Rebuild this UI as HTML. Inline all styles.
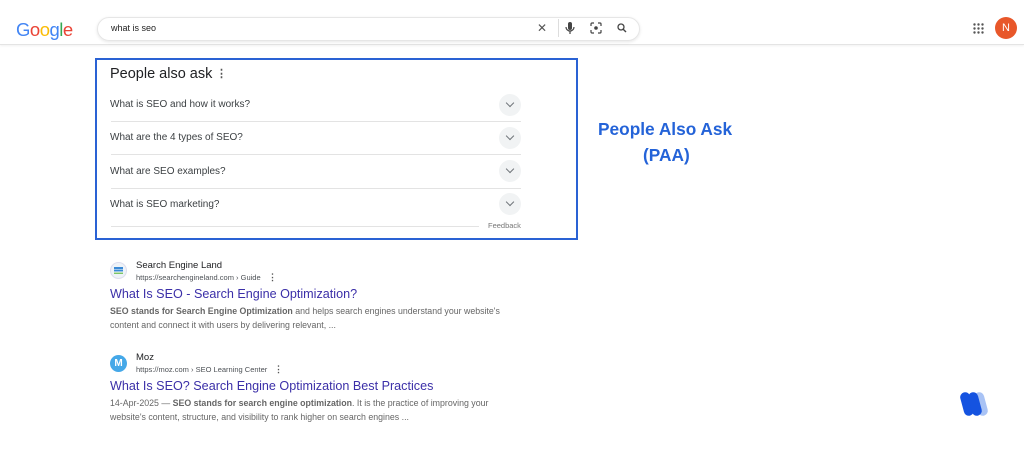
<!DOCTYPE html>
<html><head><meta charset="utf-8"><style>
*{margin:0;padding:0;box-sizing:border-box}
body{width:1024px;height:451px;background:#fff;position:relative;overflow:hidden;font-family:"Liberation Sans",Arial,sans-serif;color:#202124}
.a{position:absolute;white-space:nowrap}
.hdr{position:absolute;left:0;top:0;width:1024px;height:45px;border-bottom:1px solid #e4e4e4;box-shadow:0 1px 2px rgba(0,0,0,.06)}
.sb{position:absolute;left:97px;top:17px;width:543px;height:24px;border:1px solid #e6e6e6;border-radius:12px;box-shadow:0 1px 3px rgba(0,0,0,.1)}
.box{position:absolute;left:95px;top:58px;width:483px;height:182px;border:2px solid #2a62d4}
.q{position:absolute;left:110px;font-size:10px;color:#3c4043}
.sep{position:absolute;left:111px;width:410px;height:1px;background:#e3e3e3}
.chev{position:absolute;left:499px;width:22px;height:22px;border-radius:50%;background:#f1f3f4}
.chev:after{content:"";position:absolute;left:8px;top:6px;width:5px;height:5px;border-right:1.3px solid #70757a;border-bottom:1.3px solid #70757a;transform:rotate(45deg)}
.t{position:absolute;left:110px;font-size:12.6px;color:#3b2fa8}
.s{position:absolute;left:110px;font-size:8.8px;color:#666}
</style></head><body>
<div class="hdr"></div>
<div class="a" style="left:16px;top:19px;font-size:18.5px;letter-spacing:-0.5px"><span style="color:#4285f4">G</span><span style="color:#ea4335">o</span><span style="color:#fbbc05">o</span><span style="color:#4285f4">g</span><span style="color:#34a853">l</span><span style="color:#ea4335">e</span></div>
<div class="sb"></div>
<div class="a" style="left:111px;top:23px;font-size:9px;color:#222">what is seo</div>
<div class="a" style="left:537px;top:21px;font-size:12px;color:#555">✕</div>
<div class="a" style="left:558px;top:19px;width:1px;height:18px;background:#ddd"></div>
<svg class="a" style="left:565px;top:22px" width="10" height="13" viewBox="0 0 10 13"><rect x="3" y="0" width="4" height="8" rx="2" fill="#444"/><path d="M1 5a4 4 0 0 0 8 0M5 9v3" stroke="#444" fill="none" stroke-width="1.2"/></svg>
<svg class="a" style="left:590px;top:22px" width="12" height="12" viewBox="0 0 12 12"><path d="M1 4V2a1 1 0 0 1 1-1h2M8 1h2a1 1 0 0 1 1 1v2M11 8v2a1 1 0 0 1-1 1H8M4 11H2a1 1 0 0 1-1-1V8" stroke="#444" fill="none" stroke-width="1.2"/><circle cx="6" cy="6" r="1.8" fill="#444"/></svg>
<svg class="a" style="left:617px;top:23px" width="10" height="10" viewBox="0 0 10 10"><circle cx="4" cy="4" r="3" stroke="#444" fill="none" stroke-width="1.3"/><path d="M6.2 6.2 9 9" stroke="#444" stroke-width="1.4"/></svg>
<svg class="a" style="left:973px;top:23px" width="11" height="11" viewBox="0 0 11 11" fill="#555"><circle cx="1.5" cy="1.5" r="1.2"/><circle cx="5.5" cy="1.5" r="1.2"/><circle cx="9.5" cy="1.5" r="1.2"/><circle cx="1.5" cy="5.5" r="1.2"/><circle cx="5.5" cy="5.5" r="1.2"/><circle cx="9.5" cy="5.5" r="1.2"/><circle cx="1.5" cy="9.5" r="1.2"/><circle cx="5.5" cy="9.5" r="1.2"/><circle cx="9.5" cy="9.5" r="1.2"/></svg>
<div class="a" style="left:995px;top:17px;width:22px;height:22px;border-radius:50%;background:#e8572a;color:#fff;font-size:11px;text-align:center;line-height:22px">N</div>

<div class="box"></div>
<div class="a" style="left:110px;top:66px;font-size:14.5px;color:#202124">People also ask</div>
<div class="a" style="left:216px;top:67px;font-size:11px;color:#555;font-weight:bold">⋮</div>
<div class="q" style="top:99px">What is SEO and how it works?</div>
<div class="chev" style="top:94px"></div>
<div class="sep" style="top:121px"></div>
<div class="q" style="top:132px">What are the 4 types of SEO?</div>
<div class="chev" style="top:127px"></div>
<div class="sep" style="top:154px"></div>
<div class="q" style="top:166px">What are SEO examples?</div>
<div class="chev" style="top:160px"></div>
<div class="sep" style="top:188px"></div>
<div class="q" style="top:199px">What is SEO marketing?</div>
<div class="chev" style="top:193px"></div>
<div class="sep" style="top:226px;width:368px"></div>
<div class="a" style="left:488px;top:221px;font-size:7.5px;color:#777">Feedback</div>

<div class="a" style="left:598px;top:119px;font-size:17.3px;font-weight:bold;color:#2463d8">People Also Ask</div>
<div class="a" style="left:643px;top:145px;font-size:17.3px;font-weight:bold;color:#2463d8">(PAA)</div>

<div class="a" style="left:110px;top:262px;width:17px;height:17px;border-radius:50%;background:#eef3f8;border:1px solid #dde"><div style="margin:4px 3px;height:7px;background:linear-gradient(#3a8ad6 0 33%,#fff 33% 45%,#3a8ad6 45% 66%,#fff 66% 78%,#7cc46a 78%)"></div></div>
<div class="a" style="left:136px;top:260px;font-size:9.5px;color:#202124">Search Engine Land</div>
<div class="a" style="left:136px;top:273px;font-size:7.5px;color:#4d5156">https://searchengineland.com › Guide</div>
<div class="a" style="left:268px;top:272px;font-size:9px;color:#555;font-weight:bold">⋮</div>
<div class="t" style="top:287px">What Is SEO - Search Engine Optimization?</div>
<div class="s" style="top:306px"><b>SEO stands for Search Engine Optimization</b> and helps search engines understand your website's</div>
<div class="s" style="top:320px">content and connect it with users by delivering relevant, ...</div>

<div class="a" style="left:110px;top:355px;width:17px;height:17px;border-radius:50%;background:#45a8e8;color:#fff;font-size:10px;font-weight:bold;text-align:center;line-height:17px">M</div>
<div class="a" style="left:136px;top:352px;font-size:9.5px;color:#202124">Moz</div>
<div class="a" style="left:136px;top:365px;font-size:7.5px;color:#4d5156">https://moz.com › SEO Learning Center</div>
<div class="a" style="left:274px;top:364px;font-size:9px;color:#555;font-weight:bold">⋮</div>
<div class="t" style="top:379px">What Is SEO? Search Engine Optimization Best Practices</div>
<div class="s" style="top:398px">14-Apr-2025 — <b>SEO stands for search engine optimization</b>. It is the practice of improving your</div>
<div class="s" style="top:412px">website's content, structure, and visibility to rank higher on search engines ...</div>

<svg class="a" style="left:960px;top:390px" width="32" height="28" viewBox="0 0 32 28"><rect x="16" y="2" width="10" height="24" rx="5" fill="#a9c3f5" transform="rotate(-15 21 14)"/><rect x="2" y="2" width="10" height="24" rx="5" fill="#1553e0" transform="rotate(-15 7 14)"/><rect x="10" y="2" width="10" height="24" rx="5" fill="#1553e0" transform="rotate(-15 15 14)"/></svg>
</body></html>
